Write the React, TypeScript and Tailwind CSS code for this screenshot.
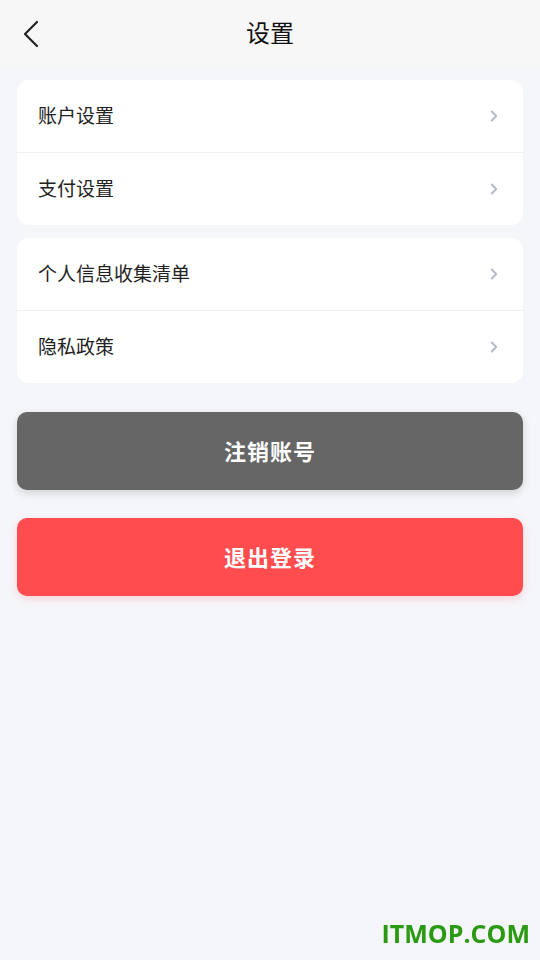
import { ChevronRight } from "lucide-react"

const groups = [
  ["账户设置", "支付设置"],
  ["个人信息收集清单", "隐私政策"]
]

export default function App() {
  return (
    <main
      className="min-h-[960px] bg-[#f5f6fa] text-[#222]"
      style={{ fontFamily: '"Noto Sans", "Noto Sans CJK SC", sans-serif' }}
    >
      {/* header */}
      <header className="relative flex h-[66px] items-center justify-center bg-[#f7f7f8]">
        <button className="absolute left-[20px] top-[19px] text-[#222]">
          <svg width="22" height="30" viewBox="0 0 22 30" fill="none">
            <path d="M17 3 L5 15 L17 27" stroke="currentColor" strokeWidth="2.2" strokeLinecap="round" strokeLinejoin="round" />
          </svg>
        </button>
        <h1 className="text-[24px] leading-none text-[#111]">设置</h1>
      </header>

      <div className="flex flex-col gap-[13px] px-[17px] pt-[14px]">
        {groups.map((items, i) => (
          <div key={i} className="overflow-hidden rounded-[12px] bg-white">
            {items.map((label, j) => (
              <div
                key={label}
                className={
                  "flex items-center justify-between pl-[21px] pr-[20px] " +
                  (j > 0 ? "h-[73px] border-t border-[#f0f0f2]" : "h-[72px]")
                }
              >
                <span className="text-[19px] text-[#222]">{label}</span>
                <ChevronRight size={18} strokeWidth={2.4} className="text-[#b4b7c6]" />
              </div>
            ))}
          </div>
        ))}
      </div>

      <div className="flex flex-col gap-[28px] px-[17px] pt-[29px]">
        <button className="h-[78px] rounded-[10px] bg-[#666666] text-[22px] font-bold tracking-[1px] text-white shadow-[0_3px_8px_rgba(0,0,0,0.15)]">
          注销账号
        </button>
        <button className="h-[78px] rounded-[10px] bg-[#ff4d4f] text-[22px] font-bold tracking-[1px] text-white shadow-[0_3px_8px_rgba(255,77,79,0.2)]">
          退出登录
        </button>
      </div>

      <div className="fixed bottom-[8px] right-[10px] text-[25px] font-bold text-[#2a9a12]" style={{ fontFamily: '"Open Sans", sans-serif' }}>
        ITMOP.COM
      </div>
    </main>
  )
}
